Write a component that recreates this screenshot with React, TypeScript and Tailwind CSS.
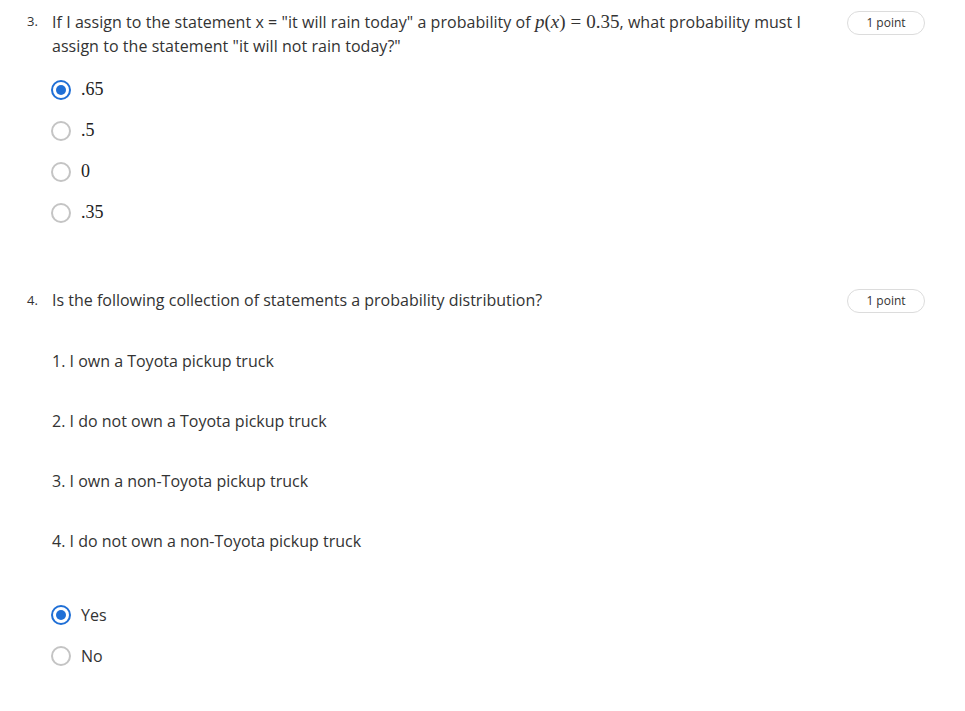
const sans = "font-['Open_Sans',sans-serif]";
const serif = "font-['Liberation_Serif','DejaVu_Serif',serif]";

const Radio = ({ checked }: { checked?: boolean }) => (
  <span
    className={`flex h-[20px] w-[20px] shrink-0 items-center justify-center rounded-full border-2 ${
      checked ? "border-[#1f6fd6]" : "border-[#c4c4c4]"
    }`}
  >
    {checked ? <span className="h-[10px] w-[10px] rounded-full bg-[#1f6fd6]" /> : null}
  </span>
);

const Badge = () => (
  <div className="flex h-[24px] w-[78px] shrink-0 items-center justify-center rounded-full border border-[#dcdcdc] text-[12px] text-[#333]">
    1 point
  </div>
);

const Option = ({ label, checked, math }: { label: string; checked?: boolean; math?: boolean }) => (
  <div className="flex h-[41px] items-center gap-[10px] pl-[51px]">
    <Radio checked={checked} />
    <span className={math ? `${serif} text-[18px] text-[#222]` : "text-[16px] text-[#333]"}>{label}</span>
  </div>
);

const App = () => {
  return (
    <div className={`${sans} min-h-[711px] w-[965px] bg-white pt-[10px] text-[#333]`}>
      <section className="flex items-start pr-[40px]">
        <span className="box-content w-[25px] pl-[27px] pt-[2px] text-[13px] leading-[18px]">3.</span>
        <p className="w-[770px] text-[16px] leading-[24px] tracking-[0.05px]">
          If I assign to the statement x = "it will rain today" a probability of{" "}
          <span className={`${serif} text-[19px] tracking-normal`}>
            <i>p</i>(<i>x</i>)<span className="mx-[5px]">=</span>0.35
          </span>
          , what probability must I assign to the statement "it will not rain today?"
        </p>
        <div className="ml-auto pt-[1px]">
          <Badge />
        </div>
      </section>
      <div className="mt-[11px]">
        <Option label=".65" checked math />
        <Option label=".5" math />
        <Option label="0" math />
        <Option label=".35" math />
      </div>

      <section className="mt-[55px] flex items-center pr-[40px]">
        <span className="box-content w-[25px] pl-[27px] text-[13px]">4.</span>
        <p className="text-[16px] leading-[25px]">Is the following collection of statements a probability distribution?</p>
        <div className="ml-auto">
          <Badge />
        </div>
      </section>
      <div className="mt-[36px] flex flex-col gap-[35px] pl-[52px] text-[16px] leading-[25px]">
        <p>1. I own a Toyota pickup truck</p>
        <p>2. I do not own a Toyota pickup truck</p>
        <p>3. I own a non-Toyota pickup truck</p>
        <p>4. I do not own a non-Toyota pickup truck</p>
      </div>
      <div className="mt-[40px]">
        <Option label="Yes" checked />
        <Option label="No" />
      </div>
    </div>
  );
};

export default App;
